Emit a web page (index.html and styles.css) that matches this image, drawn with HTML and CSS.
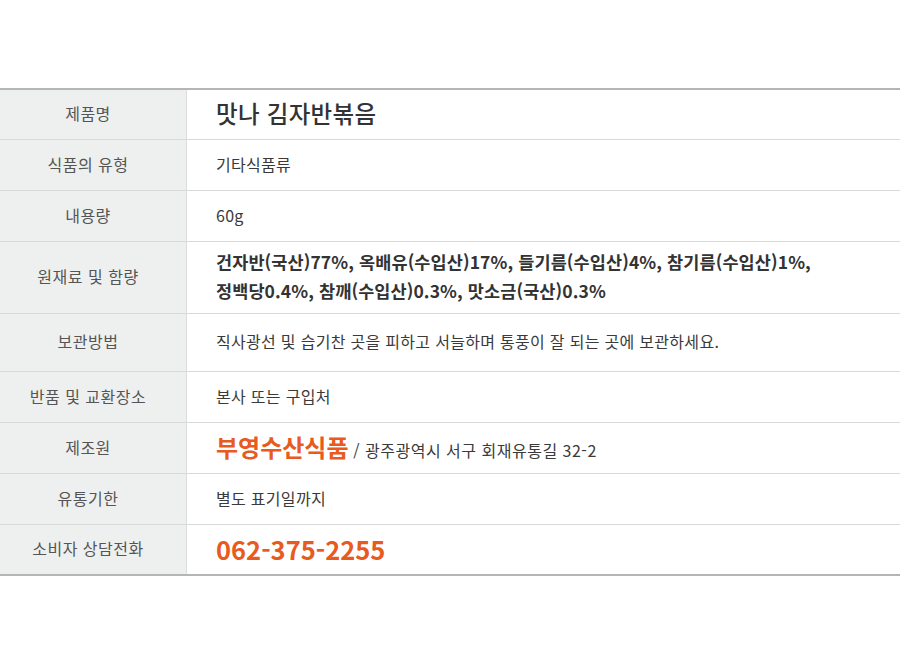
FILE: index.html
```html
<!DOCTYPE html>
<html lang="ko">
<head>
<meta charset="utf-8">
<link rel="stylesheet" href="styles.css">
</head>
<body>
<div class="page">
  <table class="info">
    <tr class="r50">
      <th>제품명</th>
      <td class="title">맛나 김자반볶음</td>
    </tr>
    <tr class="r51">
      <th>식품의 유형</th>
      <td>기타식품류</td>
    </tr>
    <tr class="r51">
      <th>내용량</th>
      <td>60g</td>
    </tr>
    <tr class="r72">
      <th>원재료 및 함량</th>
      <td class="ingr">건자반(국산)77%, 옥배유(수입산)17%, 들기름(수입산)4%, 참기름(수입산)1%,<br>정백당0.4%, 참깨(수입산)0.3%, 맛소금(국산)0.3%</td>
    </tr>
    <tr class="r58">
      <th>보관방법</th>
      <td>직사광선 및 습기찬 곳을 피하고 서늘하며 통풍이 잘 되는 곳에 보관하세요.</td>
    </tr>
    <tr class="r51">
      <th>반품 및 교환장소</th>
      <td>본사 또는 구입처</td>
    </tr>
    <tr class="r51">
      <th>제조원</th>
      <td><span class="maker">부영수산식품</span> <span class="addr">/ 광주광역시 서구 회재유통길 32-2</span></td>
    </tr>
    <tr class="r51">
      <th>유통기한</th>
      <td>별도 표기일까지</td>
    </tr>
    <tr class="r51 last">
      <th>소비자 상담전화</th>
      <td class="phone">062-375-2255</td>
    </tr>
  </table>
</div>
</body>
</html>
```

FILE: styles.css
```css
html, body {
  margin: 0;
  padding: 0;
  background: #fff;
}
.page {
  width: 900px;
  padding-top: 88px;
  font-family: "Noto Sans CJK KR", "Noto Sans", sans-serif;
}
.info {
  width: 900px;
  border-collapse: collapse;
  border-top: 2px solid #b5b5b5;
  border-bottom: 2px solid #b5b5b5;
  table-layout: fixed;
}
.info th {
  width: 176px;
  background: #eef0ef;
  border-right: 1px solid #dcdcdc;
  border-bottom: 1px solid #d9d9d9;
  font-weight: 400;
  font-size: 16px;
  letter-spacing: 0.5px;
  color: #555;
  text-align: center;
  padding: 0 10px 2px 0;
}
.info td {
  border-bottom: 1px solid #d9d9d9;
  padding: 0 0 2px 29px;
  font-size: 16px;
  letter-spacing: 0.3px;
  color: #3a3a3a;
  text-align: left;
}
.info tr.last th, .info tr.last td {
  border-bottom: none;
}
.r50 { height: 50px; }
.r51 { height: 51px; }
.r72 { height: 72px; }
.r58 { height: 58px; }
.info td.title {
  font-size: 23.5px;
  font-weight: 500;
  letter-spacing: 0.3px;
  color: #333;
}
.info td.ingr {
  font-size: 17.5px;
  font-weight: 700;
  line-height: 29px;
  letter-spacing: 0.1px;
  color: #333;
}
.maker {
  font-size: 24px;
  font-weight: 700;
  letter-spacing: 0;
  color: #e85a1e;
}
.info td.phone {
  font-size: 25.5px;
  font-weight: 700;
  letter-spacing: 0;
  color: #e85a1e;
}
.addr {
  letter-spacing: 0.5px;
}
```
